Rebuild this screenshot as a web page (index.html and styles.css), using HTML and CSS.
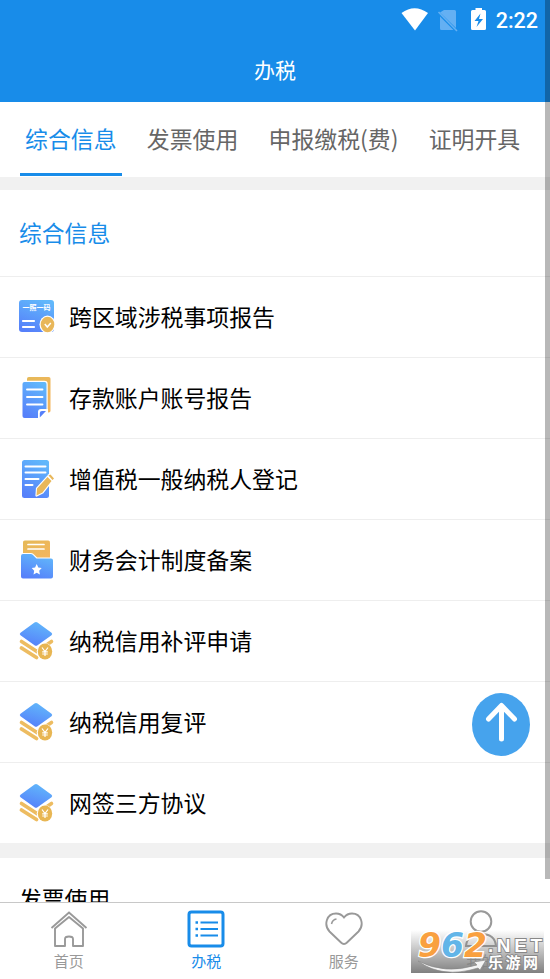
FILE: index.html
```html
<!DOCTYPE html>
<html lang="zh-CN">
<head>
<meta charset="UTF-8">
<meta name="viewport" content="width=device-width, initial-scale=1.0">
<title>办税</title>
<link rel="stylesheet" href="styles.css">
</head>
<body>
<!-- 公用图形 -->
<svg class="defs" width="0" height="0">
    <defs>
        <linearGradient id="blue" x1="0.7" y1="0" x2="0.3" y2="1">
            <stop offset="0" stop-color="#61b8fb"/>
            <stop offset="1" stop-color="#5680fa"/>
        </linearGradient>
        <linearGradient id="gold" x1="0" y1="0" x2="1" y2="1">
            <stop offset="0" stop-color="#e5b958"/>
            <stop offset="1" stop-color="#f5b55e"/>
        </linearGradient>
        <linearGradient id="shade" x1="0" y1="0" x2="0" y2="1">
            <stop offset="0" stop-color="#808080" stop-opacity="0"/>
            <stop offset="1" stop-color="#808080"/>
        </linearGradient>
        <symbol id="stack" viewBox="0 0 40 44">
            <path d="M4.500 22.500 20 32.500 34.500 22.500" fill="none" stroke="#edbc61" stroke-width="3.600" stroke-linecap="round"/>
            <path d="M4.500 29 19.500 38.500" fill="none" stroke="#edbc61" stroke-width="3.800" stroke-linecap="round"/>
            <path d="M3.500 13.800 17.500 3.600Q19 2.500 20.500 3.600L34.500 13.800Q36 15 34.500 16.200L20.500 26.200Q19 27.200 17.500 26.200L3.500 16.200Q2 15 3.500 13.800Z" fill="url(#blue)" stroke="#fff" stroke-width="2.400" paint-order="stroke"/>
            <circle cx="28" cy="32.500" r="8.300" fill="#fff"/>
            <ellipse cx="28" cy="32.500" rx="7.200" ry="8" fill="#e8b653"/>
            <path d="M25 28.500 28 32.500 31 28.500M28 32.500V37M25.200 32.800H30.800M25.200 35H30.800" fill="none" stroke="#fff" stroke-width="1.200"/>
        </symbol>
    </defs>
</svg>

<div class="app">
    <header class="header">
        <div class="status">
            <svg width="106" height="26" viewBox="0 0 106 26">
                <path d="M.500 5Q13.500-4.500 27 5L14 22.500Z" fill="#fff"/>
                <path d="M43 2H53.500Q55 2 55 3.500V20L39 4.500ZM39 8.500 52.500 22H40.500Q39 22 39 20.500Z" fill="#64b0f3"/>
                <path d="M37.500 4 56 23" stroke="#64b0f3" stroke-width="1.600"/>
                <path d="M74.500 0H81V2H83.500Q85 2 85 3.500V20.500Q85 22 83.500 22H71.500Q70 22 70 20.500V3.500Q70 2 71.500 2H74.500Z" fill="#fff"/>
                <path d="M79.500 5.500 73.500 13H77.500L75.500 19 82 11H78Z" fill="#188ce9"/>
            </svg>
            <span class="time">2:22</span>
        </div>
        <h1>办税</h1>
    </header>

    <nav class="tabs">
        <a class="tab active">综合信息</a>
        <a class="tab">发票使用</a>
        <a class="tab">申报缴税(费)</a>
        <a class="tab">证明开具</a>
    </nav>

    <main class="content">
        <section class="card">
            <h2>综合信息</h2>
            <ul class="list">
                <li>
                    <svg class="icon" viewBox="0 0 40 44">
                        <rect x="2" y="5" width="35" height="32" rx="3" fill="url(#blue)"/>
                        <text x="5.500" y="15.200" class="code" textLength="28">一照一码</text>
                        <path d="M6 26H17M6 32H17" stroke="#fff" stroke-width="2.200" stroke-linecap="round"/>
                        <ellipse cx="30.500" cy="29.500" rx="8" ry="9" fill="#fff"/>
                        <ellipse cx="30.500" cy="29.500" rx="6.800" ry="7.800" fill="#e8b75a"/>
                        <path d="M27.800 29 30.300 32 33.800 28" fill="none" stroke="#fff" stroke-width="1.500"/>
                    </svg>
                    <span>跨区域涉税事项报告</span>
                </li>
                <li>
                    <svg class="icon" viewBox="0 0 40 44">
                        <rect x="10" y="1" width="23.500" height="35.500" rx="1.800" fill="url(#gold)"/>
                        <path d="M7.500 6H27.500Q29.500 6 29.500 8V33L22.500 42H7.500Q5.500 42 5.500 40V8Q5.500 6 7.500 6Z" fill="url(#blue)" stroke="#fff" stroke-width="2.400" paint-order="stroke"/>
                        <path d="M21 43V36Q21 33 24 33H31V37L25 43Z" fill="#fff"/>
                        <path d="M22.800 41.500V37Q22.800 35 25 35H29Z" fill="#5680fa"/>
                        <path d="M10 13.500H25.500M10 21H25.500M10 28.500H25.500" stroke="#fff" stroke-width="1.900" stroke-linecap="round"/>
                    </svg>
                    <span>存款账户账号报告</span>
                </li>
                <li>
                    <svg class="icon" viewBox="0 0 40 44">
                        <rect x="5" y="3" width="27" height="38" rx="2.500" fill="url(#blue)"/>
                        <path d="M8.500 9.500H28.500M8.500 15.500H28.500M8.500 22H21.500M8.500 28H15.500" stroke="#fff" stroke-width="2" stroke-linecap="round"/>
                        <path d="M20 31.500 30.500 20 34.500 24 25.500 35.500 19.500 38.500ZM31.500 18.500 33.500 17.500 37 21.500 35.500 23Z" fill="#e8b75a" stroke="#fff" stroke-width="2.200" stroke-linejoin="round" paint-order="stroke"/>
                    </svg>
                    <span>增值税一般纳税人登记</span>
                </li>
                <li>
                    <svg class="icon" viewBox="0 0 40 44">
                        <rect x="6" y="2.500" width="27" height="20" rx="1.800" fill="url(#gold)"/>
                        <path d="M11 6.500H27M11 11H27" stroke="#fff" stroke-width="1.700" stroke-linecap="round"/>
                        <path d="M6 16H14Q15.500 16 16.500 17.500L19.500 20.500H34Q36 20.500 36 22.500V38.500Q36 40.500 34 40.500H6Q4 40.500 4 38.500V18Q4 16 6 16Z" fill="url(#blue)" stroke="#fff" stroke-width="2.200" paint-order="stroke"/>
                        <path d="M19.700 26 21.300 29.600 24.700 30.100 22.200 32.700 22.900 36.600 19.700 34.800 16.500 36.600 17.200 32.700 14.700 30.100 18.100 29.600Z" fill="#fff"/>
                    </svg>
                    <span>财务会计制度备案</span>
                </li>
                <li>
                    <svg class="icon"><use href="#stack"/></svg>
                    <span>纳税信用补评申请</span>
                </li>
                <li>
                    <svg class="icon"><use href="#stack"/></svg>
                    <span>纳税信用复评</span>
                </li>
                <li>
                    <svg class="icon"><use href="#stack"/></svg>
                    <span>网签三方协议</span>
                </li>
            </ul>
        </section>
        <section class="card next">
            <h2>发票使用</h2>
        </section>
    </main>

    <footer class="bottom-nav">
        <a class="nav-item">
            <svg width="38" height="38" viewBox="0 0 38 38" fill="none" stroke="#999" stroke-width="1.900">
                <path d="M1.500 18 19 2.500 36.500 18"/>
                <path d="M5 18.500V36H15V29Q15 26.500 19 26.500T23 29V36H33V18.500L19 7Z" stroke-linejoin="round"/>
            </svg>
            <span>首页</span>
        </a>
        <a class="nav-item active">
            <svg width="38" height="38" viewBox="0 0 38 38" fill="none" stroke="#188ce9">
                <rect x="2" y="2" width="34" height="34" rx="2.500" stroke-width="3"/>
                <path d="M13.500 12.500H31M13.500 19H31M13.500 25.500H31" stroke-width="2.100"/>
                <path d="M8.500 12.500H11M8.500 19H11M8.500 25.500H11" stroke-width="2.300"/>
            </svg>
            <span>办税</span>
        </a>
        <a class="nav-item">
            <svg width="38" height="38" viewBox="0 0 38 38" fill="none" stroke="#999">
                <path d="M19 34Q17.500 34 16 32.500L4.500 21.500C-1.500 15 1.500 3.500 11 3.500Q16 3.500 19 7.500Q22 3.500 27 3.500C36.500 3.500 39.500 15 33.500 21.500L22 32.500Q20.500 34 19 34Z" stroke-width="1.900"/>
                <path d="M6.500 14Q7.500 9.500 11.500 9" stroke-width="1.500"/>
            </svg>
            <span>服务</span>
        </a>
        <a class="nav-item">
            <svg width="38" height="38" viewBox="0 0 38 38" fill="none" stroke="#999" stroke-width="2">
                <circle cx="19" cy="11.500" r="10.300"/>
                <path d="M4 36Q5 24 19 24T34 36Z"/>
            </svg>
            <span>我的</span>
        </a>
    </footer>

    <a class="to-top">
        <svg width="58" height="63" viewBox="0 0 58 63">
            <ellipse cx="29" cy="31.500" rx="29" ry="31.500" fill="#46a3ed"/>
            <path d="M29.500 46V13M16.500 26 29.500 12.500 42.500 26" fill="none" stroke="#fff" stroke-width="5" stroke-linecap="round" stroke-linejoin="round"/>
        </svg>
    </a>
    <div class="scrollbar"></div>

    <svg class="logo" width="137" height="47" viewBox="0 0 137 47">
        <rect x="0" y="1" width="133" height="43" fill="url(#shade)"/>
        <text y="27.500" class="logo-num"><tspan x="7" fill="#f9a03f">9</tspan><tspan x="30" fill="#62b5e8">6</tspan><tspan x="53" fill="#f9a03f">2</tspan></text>
        <text x="77" y="22.500" textLength="54" lengthAdjust="spacing" class="logo-net">.NET</text>
        <path d="M7 32Q34 46 66 36L63 33 75 31 69 41 67 39Q31 50 7 32Z" fill="#f4f4f4" stroke="#888" stroke-width=".6"/>
        <text x="77" y="39" textLength="50" class="logo-name">乐游网</text>
    </svg>
</div>
</body>
</html>
```

FILE: styles.css
```css
* {
    box-sizing: border-box;
}

body {
    margin: 0;
    font-family: "Noto Sans CJK SC", sans-serif;
    background-color: #fff;
    color: #000;
}

h1, h2, ul {
    margin: 0;
    padding: 0;
    font-weight: 400;
}

.defs {
    position: absolute;
}

.app {
    position: relative;
    display: flex;
    flex-direction: column;
    height: 979px;
    overflow: hidden;
}

.header {
    height: 102px;
    background-color: #188ce9;
    color: #fff;
}

.status {
    display: flex;
    justify-content: flex-end;
    height: 40px;
    padding: 8px 12px 0 0;
}

.status svg {
    margin-right: -11px;
}

.time {
    font: 500 21.5px/25px Roboto, sans-serif;
}

.header h1 {
    font-size: 21px;
    line-height: 59px;
    text-align: center;
}

.tabs {
    display: flex;
    gap: 20.2px;
    height: 88px;
    padding-left: 20px;
    border-bottom: 13px solid #f1f1f1;
}

.tab {
    height: 74px;
    padding: 0 5px;
    font-size: 22.9px;
    line-height: 72px;
    color: #666;
    white-space: nowrap;
}

.tab.active {
    border-bottom: 3px solid #188ce9;
    color: #188ce9;
}

.content {
    flex: 1;
    min-height: 0;
    overflow: hidden;
}

.card h2 {
    height: 86px;
    padding-left: 19px;
    font-size: 22.8px;
    line-height: 85px;
    color: #188ce9;
}

.list {
    list-style: none;
    border-bottom: 15px solid #f1f1f1;
}

.list li {
    display: flex;
    align-items: center;
    gap: 12px;
    height: 81px;
    padding-left: 17px;
    border-top: 1px solid #eee;
    font-size: 22.9px;
}

.list span {
    padding-bottom: 2px;
}

.icon {
    width: 40px;
    height: 44px;
}

.code {
    font-size: 7px;
    font-weight: 700;
    fill: #fff;
}

.card.next h2 {
    line-height: 82px;
    color: #000;
}

.bottom-nav {
    display: flex;
    height: 77px;
    border-top: 1px solid #c8c8c8;
    background-color: #fff;
}

.nav-item {
    flex: 1;
    display: flex;
    flex-direction: column;
    align-items: center;
    padding-top: 7px;
    font-size: 15px;
    line-height: 26px;
    color: #999;
}

.nav-item.active {
    color: #188ce9;
}

.to-top {
    position: absolute;
    left: 472px;
    top: 693px;
    height: 63px;
}

.scrollbar {
    position: absolute;
    top: 0;
    right: 0;
    width: 5px;
    height: 879px;
    background-color: rgba(0, 0, 0, 0.28);
}

.logo {
    position: absolute;
    left: 411px;
    top: 929px;
}

.logo-num {
    font: italic 700 33px "DejaVu Sans", sans-serif;
    stroke: #fff;
    stroke-width: 2.5px;
    paint-order: stroke;
}

.logo-net,
.logo-name {
    fill: #fff;
    stroke: #888;
    stroke-width: 1.8px;
    paint-order: stroke;
}

.logo-net {
    font: 700 19px "Liberation Sans", sans-serif;
}

.logo-name {
    font-size: 15px;
    font-weight: 700;
}
```
